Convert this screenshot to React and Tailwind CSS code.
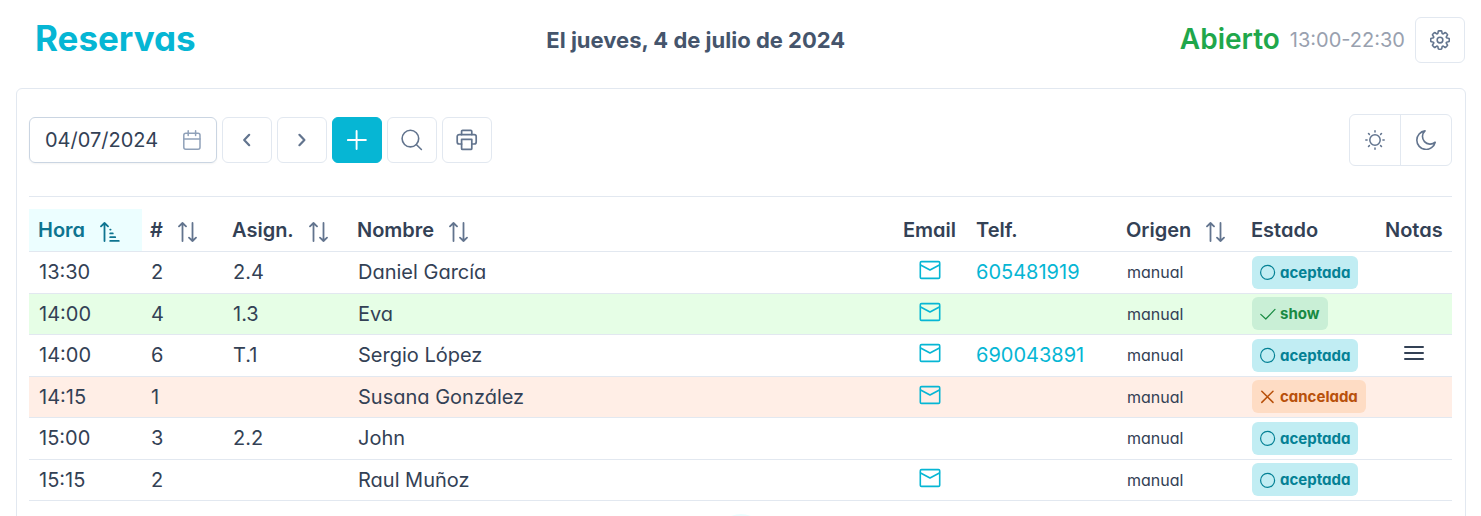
import React, { useState } from 'react'

const ICON = { fill: 'none', stroke: 'currentColor', strokeLinecap: 'round', strokeLinejoin: 'round' }

const SortIcon = () => (
  <svg width="20" height="20" viewBox="0 0 20 20" strokeWidth="1.8" {...ICON}>
    <path d="M4.5 19V1M1 4.4L4.5 1 8 4.4M14.5 1v18M11 15.6l3.5 3.4 3.5-3.4" />
  </svg>
)

const SortUpIcon = () => (
  <svg width="20" height="20" viewBox="0 0 20 20" strokeWidth="1.8" {...ICON}>
    <path d="M4.5 19V1M1 4.4L4.5 1 8 4.4" />
    <path d="M10.2 7.6h.4M10.2 11.4h2.6M10.2 15.2h5M10.2 18.9h8.6" />
  </svg>
)

const MailIcon = () => (
  <svg width="22" height="22" viewBox="0 0 22 22" strokeWidth="1.6" {...ICON}>
    <rect x="1.3" y="2.6" width="19.4" height="16.8" rx="1.2" />
    <path d="M1.6 6l9.4 5 9.4-5" />
  </svg>
)

const CircleIcon = () => (
  <svg width="16" height="16" viewBox="0 0 16 16" strokeWidth="1.2" {...ICON}>
    <circle cx="7.6" cy="8.4" r="7" />
  </svg>
)

const CheckIcon = () => (
  <svg width="16" height="16" viewBox="0 0 16 16" strokeWidth="1.2" {...ICON}>
    <path d="M.8 8.4l5 4.6L15 3.4" />
  </svg>
)

const TimesIcon = () => (
  <svg width="16" height="16" viewBox="0 0 16 16" strokeWidth="1.5" {...ICON}>
    <path d="M1.8 2.2l11.2 11.2M13 2.2L1.8 13.4" />
  </svg>
)

const BarsIcon = () => (
  <svg width="20" height="20" viewBox="0 0 20 20" strokeWidth="2" {...ICON}>
    <path d="M1 4h18M1 10h18M1 16h18" />
  </svg>
)

const CalendarIcon = () => (
  <svg width="20" height="20" viewBox="0 0 20 20" strokeWidth="1.5" {...ICON}>
    <rect x="1.8" y="3.2" width="16.2" height="16" rx="2" />
    <path d="M2 9h16M6.2 .8v4.6M13.6 .8v4.6" />
  </svg>
)

const ChevronLeft = () => (
  <svg width="20" height="20" viewBox="0 0 20 20" strokeWidth="2.2" {...ICON}>
    <path d="M12.2 4.8L7.2 10l5 5.2" />
  </svg>
)

const ChevronRight = () => (
  <svg width="20" height="20" viewBox="0 0 20 20" strokeWidth="2.2" {...ICON}>
    <path d="M7.4 4.8l5 5.2-5 5.2" />
  </svg>
)

const PlusIcon = () => (
  <svg width="20" height="20" viewBox="0 0 20 20" strokeWidth="1.9" {...ICON}>
    <path d="M9.6 1v18M.9 10h18" />
  </svg>
)

const SearchIcon = () => (
  <svg width="22" height="22" viewBox="0 0 22 22" strokeWidth="1.6" {...ICON}>
    <circle cx="9.4" cy="9.6" r="8.3" />
    <path d="M15.3 15.5l5.1 5" />
  </svg>
)

const PrintIcon = () => (
  <svg width="22" height="22" viewBox="0 0 22 22" strokeWidth="1.7" {...ICON}>
    <path d="M5.6 5.6V2.4a1 1 0 0 1 1-1h8.2a1 1 0 0 1 1 1v3.2" />
    <path d="M5.6 15H3.2a2 2 0 0 1-2-2V7.6a2 2 0 0 1 2-2h15a2 2 0 0 1 2 2V13a2 2 0 0 1-2 2h-2.4" />
    <path d="M5.6 10.4h10.2v9a1 1 0 0 1-1 1H6.6a1 1 0 0 1-1-1z" />
  </svg>
)

const SunIcon = () => (
  <svg width="20" height="20" viewBox="0 0 20 20" strokeWidth="1.5" {...ICON}>
    <circle cx="10" cy="10" r="5.2" />
    <path d="M10 .8v1.3M10 17.9v1.3M.8 10h1.3M17.9 10h1.3M3.5 3.5l.9.9M15.6 15.6l.9.9M3.5 16.5l.9-.9M15.6 4.4l.9-.9" />
  </svg>
)

const MoonIcon = () => (
  <svg width="20" height="20" viewBox="0 0 20 20" strokeWidth="1.6" {...ICON}>
    <path d="M9 .9A9.3 9.3 0 1 0 19.2 12.2 7.4 7.4 0 0 1 9 .9z" />
  </svg>
)

const CogIcon = () => (
  <svg width="20" height="20" viewBox="0 0 24 24" strokeWidth="1.9" {...ICON}>
    <path d="M10.8 1h2.4a1 1 0 0 1 1 .9l.2 1.6a1.2 1.2 0 0 0 2 .8l1.3-1a1 1 0 0 1 1.3.1l1.7 1.7a1 1 0 0 1 .1 1.3l-1 1.3a1.2 1.2 0 0 0 .8 2l1.6.2a1 1 0 0 1 .9 1v2.2a1 1 0 0 1-.9 1l-1.6.2a1.2 1.2 0 0 0-.8 2l1 1.3a1 1 0 0 1-.1 1.3L19 20.6a1 1 0 0 1-1.3.1l-1.3-1a1.2 1.2 0 0 0-2 .8l-.2 1.6a1 1 0 0 1-1 .9h-2.4a1 1 0 0 1-1-.9l-.2-1.6a1.2 1.2 0 0 0-2-.8l-1.3 1a1 1 0 0 1-1.3-.1l-1.7-1.7a1 1 0 0 1-.1-1.3l1-1.3a1.2 1.2 0 0 0-.8-2l-1.6-.2a1 1 0 0 1-.9-1v-2.2a1 1 0 0 1 .9-1l1.6-.2a1.2 1.2 0 0 0 .8-2l-1-1.3a1 1 0 0 1 .1-1.3L5 3.4a1 1 0 0 1 1.3-.1l1.3 1a1.2 1.2 0 0 0 2-.8l.2-1.6a1 1 0 0 1 1-.9z" />
    <circle cx="12" cy="12" r="3.4" />
  </svg>
)

const STATUS = {
  aceptada: { icon: CircleIcon, className: 'bg-[#c1edf3] text-[#048195]' },
  show: { icon: CheckIcon, className: 'bg-[#c9efd6] text-[#188a42]' },
  cancelada: { icon: TimesIcon, className: 'bg-[#fedcc4] text-[#b8500b]' },
}

const BOOKINGS = [
  { id: 1, hora: '13:30', num: 2, asign: '2.4', nombre: 'Daniel García', email: true, telf: '605481919', origen: 'manual', estado: 'aceptada' },
  { id: 2, hora: '14:00', num: 4, asign: '1.3', nombre: 'Eva', email: true, telf: '', origen: 'manual', estado: 'show' },
  { id: 3, hora: '14:00', num: 6, asign: 'T.1', nombre: 'Sergio López', email: true, telf: '690043891', origen: 'manual', estado: 'aceptada', notas: true },
  { id: 4, hora: '14:15', num: 1, asign: '', nombre: 'Susana González', email: true, telf: '', origen: 'manual', estado: 'cancelada' },
  { id: 5, hora: '15:00', num: 3, asign: '2.2', nombre: 'John', email: false, telf: '', origen: 'manual', estado: 'aceptada' },
  { id: 6, hora: '15:15', num: 2, asign: '', nombre: 'Raul Muñoz', email: true, telf: '', origen: 'manual', estado: 'aceptada' },
]

const COLUMNS = [
  { label: 'Hora', width: 'w-[113px]', sort: true, active: true },
  { label: '#', width: 'w-[82px]', sort: true },
  { label: 'Asign.', width: 'w-[125px]', sort: true },
  { label: 'Nombre', width: '', sort: true },
  { label: 'Email', width: 'w-[73px]' },
  { label: 'Telf.', width: 'w-[150px]' },
  { label: 'Origen', width: 'w-[125px]', sort: true },
  { label: 'Estado', width: 'w-[134px]' },
  { label: 'Notas', width: 'w-[75px]' },
]

const ROW_COLORS = {
  show: 'bg-[#e6fee6]',
  cancelada: 'bg-[#ffeee6]',
}

function IconButton({ label, primary, onClick, children }) {
  return (
    <button
      type="button"
      aria-label={label}
      onClick={onClick}
      className={`flex h-[46px] w-[50px] items-center justify-center rounded-md border ${
        primary ? 'border-[#06b6d4] bg-[#06b6d4] text-white' : 'border-slate-200 bg-white text-slate-500'
      }`}
    >
      {children}
    </button>
  )
}

function StatusTag({ status }) {
  const { icon: Icon, className } = STATUS[status]
  return (
    <span className={`inline-flex h-[33px] items-center gap-1 rounded-md px-2 text-[15px] font-bold ${className}`}>
      <Icon />
      {status}
    </span>
  )
}

export default function App() {
  const [date, setDate] = useState('04/07/2024')

  return (
    <div className="h-screen overflow-hidden bg-white pt-4 pr-[15px] pl-4 font-['Inter',sans-serif] text-xl text-[#334155] [font-feature-settings:'cv11']">
      <header className="flex h-12 items-center justify-between pr-px pl-[19px]">
        <h1 className="pr-4 pb-1 text-[35px] leading-10 font-bold text-[#06b6d4]">Reservas</h1>
        <h2 className="text-[22px] font-bold text-slate-600">El jueves, 4 de julio de 2024</h2>
        <div className="flex items-center gap-[10px]">
          <span className="text-[28px] font-semibold text-[#1fa74b]">Abierto</span>
          <span className="text-gray-400">13:00-22:30</span>
          <IconButton label="Ajustes"><CogIcon /></IconButton>
        </div>
      </header>

      <main className="mt-6 rounded-md border border-slate-200 pt-[25px] pr-[13px] pl-3">
        <div className="flex items-center justify-between pb-[30px]">
          <div className="flex items-center gap-[5px]">
            <div className="flex h-[46px] w-[188px] items-center rounded-md border border-slate-300 pr-[14px] pl-[15px] shadow-xs">
              <input
                type="text"
                aria-label="Fecha"
                value={date}
                onChange={(e) => setDate(e.target.value)}
                className="w-full min-w-0 outline-none"
              />
              <span className="text-slate-400"><CalendarIcon /></span>
            </div>
            <IconButton label="Día anterior"><ChevronLeft /></IconButton>
            <IconButton label="Día siguiente"><ChevronRight /></IconButton>
            <IconButton label="Nueva reserva" primary><PlusIcon /></IconButton>
            <IconButton label="Buscar"><SearchIcon /></IconButton>
            <IconButton label="Imprimir"><PrintIcon /></IconButton>
          </div>
          <div className="flex h-[52px] divide-x divide-slate-200 rounded-md border border-slate-200 text-slate-500">
            <button type="button" aria-label="Turno de día" className="flex w-[51px] items-center justify-center">
              <SunIcon />
            </button>
            <button type="button" aria-label="Turno de noche" className="flex w-[50px] items-center justify-center">
              <MoonIcon />
            </button>
          </div>
        </div>

        <div className="border-t border-slate-200 pt-3">
          <table className="w-full table-fixed border-collapse text-left">
            <thead>
              <tr className="h-[42px] border-b border-slate-200">
                {COLUMNS.map((col) => (
                  <th
                    key={col.label}
                    className={`px-2 font-semibold first:pl-[9px] ${col.width} ${col.active ? 'bg-[#ecfeff] text-[#0e7490]' : ''}`}
                  >
                    <div className="flex items-center gap-[15px]">
                      {col.label}
                      {col.sort && (
                        <span className={`pt-1 ${col.active ? '' : 'text-slate-500'}`}>
                          {col.active ? <SortUpIcon /> : <SortIcon />}
                        </span>
                      )}
                    </div>
                  </th>
                ))}
              </tr>
            </thead>
            <tbody>
              {BOOKINGS.map((b) => (
                <tr key={b.id} className={`border-b border-slate-200 odd:h-[42px] even:h-[41px] ${ROW_COLORS[b.estado] || ''}`}>
                  <td className="pr-[9px] pl-[10px]">{b.hora}</td>
                  <td className="px-[9px]">{b.num}</td>
                  <td className="px-[9px]">{b.asign}</td>
                  <td className="px-[9px]">{b.nombre}</td>
                  <td className="pr-3 pb-1 pl-2">
                    {b.email && (
                      <a href="#email" aria-label={`Email de ${b.nombre}`} className="flex justify-center text-[#06b6d4]">
                        <MailIcon />
                      </a>
                    )}
                  </td>
                  <td className="px-2">
                    {b.telf && <a href={`tel:${b.telf}`} className="text-[#06b6d4]">{b.telf}</a>}
                  </td>
                  <td className="px-[9px] text-base">{b.origen}</td>
                  <td className="px-[9px]">
                    <div className="flex"><StatusTag status={b.estado} /></div>
                  </td>
                  <td className="pr-[10px] pb-1 pl-2">
                    {b.notas && <div className="flex justify-center"><BarsIcon /></div>}
                  </td>
                </tr>
              ))}
            </tbody>
          </table>
        </div>

        {/* Paginator */}
        <nav className="flex justify-center pt-[13px] pb-3">
          <button type="button" aria-label="Página actual" className="size-12 rounded-full bg-[#ecfeff]" />
        </nav>
      </main>
    </div>
  )
}
